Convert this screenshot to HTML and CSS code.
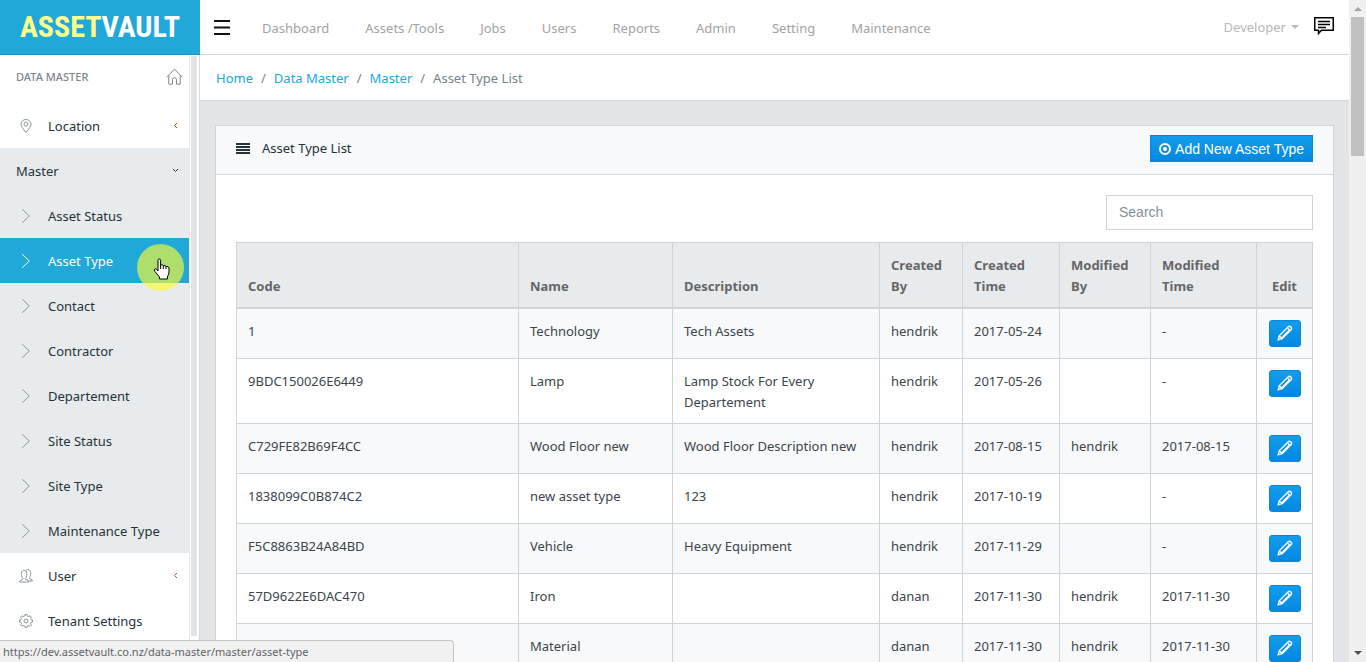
FILE: index.html
```
<!DOCTYPE html>
<html lang="en">
<head>
<meta charset="utf-8">
<title>Asset Type List</title>
<link rel="stylesheet" href="styles.css">
</head>
<body>
<svg class="sprite" aria-hidden="true">
  <symbol id="chevron" viewBox="0 0 8 14"><path d="M.3.3l7 6.700-7 6.700"/></symbol>
  <symbol id="small-left" viewBox="0 0 6 7"><path d="M4.500 1L2 3.500L4.500 6"/></symbol>
  <symbol id="small-down" viewBox="0 0 7 6"><path d="M1 1.500L3.500 4L6 1.500"/></symbol>
  <symbol id="pencil" viewBox="0 0 16 16"><path d="M1.200 14.800l1-4L11.300 1.700q1.200-1 2.500.3t.4 2.500L5.200 13.700zM2.200 10.800l3 2.900M11 3.500l1.500 1.500L5 12.500"/></symbol>
</svg>
<div class="page">
  <div class="app">
    <header class="topbar">
      <a class="brand" href="#"><span class="brand-first">ASSET</span>VAULT</a>
      <button class="menu-toggle" type="button" aria-label="Toggle menu">
        <svg width="16" height="15" viewBox="0 0 16 15"><path d="M0 1h16M0 7.500h16M0 14h16"/></svg>
      </button>
      <nav class="topnav">
        <a href="#">Dashboard</a>
        <a href="#">Assets /Tools</a>
        <a href="#">Jobs</a>
        <a href="#">Users</a>
        <a href="#">Reports</a>
        <a href="#">Admin</a>
        <a href="#">Setting</a>
        <a href="#">Maintenance</a>
      </nav>
      <button class="account" type="button">Developer<span class="caret"></span></button>
      <button class="messages" type="button" aria-label="Messages">
        <svg width="20" height="18" viewBox="0 0 20 18"><path d="M.75.75h18.500v12.500H7.500L4.500 16.500v-3.250H.75z"/><path d="M4 4.500h12M4 7.500h12M4 10.500h8"/></svg>
      </button>
    </header>
    <div class="body">
      <aside class="sidebar">
        <div class="menu">
          <div class="menu-title">DATA MASTER
            <svg class="home" viewBox="0 0 17 17"><path d="M.8 9L8.500 1.200 16.200 9M2.800 7.500v8.700h3.700v-4.700q0-1.700 2-1.700t2 1.700v4.700h3.700V7.500"/></svg>
          </div>
          <a class="item" href="#">
            <svg class="icon" viewBox="0 0 14 14"><path d="M7 13.500C4 9.800 2 7.500 2 5.200a5 4.700 0 0 1 10 0C12 7.500 10 9.800 7 13.500z"/><circle cx="7" cy="5.200" r="2"/></svg>
            Location<svg class="arrow arrow-left"><use href="#small-left"/></svg>
          </a>
          <div class="submenu">
            <a class="item" href="#">Master<svg class="arrow arrow-down"><use href="#small-down"/></svg></a>
            <a class="item" href="#"><svg class="icon"><use href="#chevron"/></svg>Asset Status</a>
            <a class="item active" href="#"><svg class="icon"><use href="#chevron"/></svg>Asset Type</a>
            <a class="item" href="#"><svg class="icon"><use href="#chevron"/></svg>Contact</a>
            <a class="item" href="#"><svg class="icon"><use href="#chevron"/></svg>Contractor</a>
            <a class="item" href="#"><svg class="icon"><use href="#chevron"/></svg>Departement</a>
            <a class="item" href="#"><svg class="icon"><use href="#chevron"/></svg>Site Status</a>
            <a class="item" href="#"><svg class="icon"><use href="#chevron"/></svg>Site Type</a>
            <a class="item" href="#"><svg class="icon"><use href="#chevron"/></svg>Maintenance Type</a>
          </div>
          <a class="item" href="#">
            <svg class="icon" viewBox="0 0 14 14"><path d="M.5 13c0-2.500 3.500-1.500 3.500-3.500C2.500 8 2.300 6 2.500 4c.3-3.500 5-3.500 5.300 0 .2 2 0 4-1.500 5.500 0 2 3.700 1 3.700 3.500zM7 1.300c2-1.600 4.500-.3 4.700 2.200.2 2-.1 3.700-1.400 5 0 2 3.200 1.200 3.200 3.500H10"/></svg>
            User<svg class="arrow arrow-left"><use href="#small-left"/></svg>
          </a>
          <a class="item" href="#">
            <svg class="icon" viewBox="0 0 14 14"><path d="M5.800 2L6 .6h2L8.200 2l1.600.6 1.200-.9 1.400 1.400-.9 1.200.6 1.500 1.400.2v2l-1.400.2-.6 1.600.9 1.200-1.400 1.400-1.200-.9-1.600.6L8 13.400H6L5.800 12l-1.600-.6-1.200.9-1.400-1.400.9-1.200L1.900 8.200.5 8V6l1.400-.2.6-1.500-.9-1.200L3 1.700l1.200.9z"/><circle cx="7" cy="7" r="2"/></svg>
            Tenant Settings
          </a>
        </div>
        <div class="side-scroll"><div class="side-thumb"></div></div>
      </aside>
      <div class="content">
        <nav class="crumbs" aria-label="Breadcrumb">
          <a href="#">Home</a><span>/</span><a href="#">Data Master</a><span>/</span><a href="#">Master</a><span>/</span>Asset Type List
        </nav>
        <main class="main">
          <section class="card">
            <div class="card-head">
              <svg width="14" height="11" viewBox="0 0 14 11"><path d="M0 1h14M0 4h14M0 7h14M0 10h14"/></svg>
              <h1>Asset Type List</h1>
              <button class="add" type="button">
                <svg width="12" height="12" viewBox="0 0 12 12"><circle class="ring" cx="6" cy="6" r="5"/><circle class="dot" cx="6" cy="6" r="2"/></svg>
                Add New Asset Type
              </button>
            </div>
            <div class="card-body">
              <input class="search" type="text" placeholder="Search" aria-label="Search">
              <table>
                <colgroup><col><col class="c-name"><col class="c-desc"><col class="c-by"><col class="c-time"><col class="c-mby"><col class="c-mtime"><col class="c-edit"></colgroup>
                <thead><tr><th>Code</th><th>Name</th><th>Description</th><th>Created By</th><th>Created Time</th><th>Modified By</th><th>Modified Time</th><th class="center">Edit</th></tr></thead>
                <tbody>
                  <tr><td>1</td><td>Technology</td><td>Tech Assets</td><td>hendrik</td><td>2017-05-24</td><td></td><td>-</td><td class="action"><button class="edit" type="button" aria-label="Edit"><svg><use href="#pencil"/></svg></button></td></tr>
                  <tr><td>9BDC150026E6449</td><td>Lamp</td><td>Lamp Stock For Every Departement</td><td>hendrik</td><td>2017-05-26</td><td></td><td>-</td><td class="action"><button class="edit" type="button" aria-label="Edit"><svg><use href="#pencil"/></svg></button></td></tr>
                  <tr><td>C729FE82B69F4CC</td><td>Wood Floor new</td><td>Wood Floor Description new</td><td>hendrik</td><td>2017-08-15</td><td>hendrik</td><td>2017-08-15</td><td class="action"><button class="edit" type="button" aria-label="Edit"><svg><use href="#pencil"/></svg></button></td></tr>
                  <tr><td>1838099C0B874C2</td><td>new asset type</td><td>123</td><td>hendrik</td><td>2017-10-19</td><td></td><td>-</td><td class="action"><button class="edit" type="button" aria-label="Edit"><svg><use href="#pencil"/></svg></button></td></tr>
                  <tr><td>F5C8863B24A84BD</td><td>Vehicle</td><td>Heavy Equipment</td><td>hendrik</td><td>2017-11-29</td><td></td><td>-</td><td class="action"><button class="edit" type="button" aria-label="Edit"><svg><use href="#pencil"/></svg></button></td></tr>
                  <tr><td>57D9622E6DAC470</td><td>Iron</td><td></td><td>danan</td><td>2017-11-30</td><td>hendrik</td><td>2017-11-30</td><td class="action"><button class="edit" type="button" aria-label="Edit"><svg><use href="#pencil"/></svg></button></td></tr>
                  <tr><td></td><td>Material</td><td></td><td>danan</td><td>2017-11-30</td><td>hendrik</td><td>2017-11-30</td><td class="action"><button class="edit" type="button" aria-label="Edit"><svg><use href="#pencil"/></svg></button></td></tr>
                </tbody>
              </table>
            </div>
          </section>
        </main>
      </div>
    </div>
  </div>
  <div class="scrollbar">
    <span class="scroll-up"></span>
    <div class="scroll-thumb"></div>
    <span class="scroll-down"></span>
  </div>
  <div class="status">https://dev.assetvault.co.nz/data-master/master/asset-type</div>
  <div class="halo"></div>
  <svg class="pointer" viewBox="0 0 18 22"><path d="M5 12V2.500q0-1.500 1.300-1.500t1.300 1.500V7q2-.8 2.700.7 2-.6 2.700.8 2.700-.5 3 1.500v4q0 2-1.500 4.500v2.500H6.500v-2L2 13.500Q.5 11.500 2 10.700q1.300-.5 3 2.300z"/><path d="M7.600 7v4M10.300 7.700V11M13 8.500V11"/></svg>
</div>
</body>
</html>
```
FILE: styles.css
```
* { box-sizing: border-box; }

body {
  margin: 0;
  font: 13px/21px "Noto Sans", "Open Sans", sans-serif;
  color: #263238;
}

a { text-decoration: none; color: #20a8d8; }
button { padding: 0; border: 0; background: none; font: inherit; cursor: pointer; }
svg { fill: none; stroke: currentColor; flex: none; }
.sprite { display: none; }

.page { position: relative; display: flex; height: 100vh; overflow: hidden; }
.app { flex: 1; min-width: 0; display: flex; flex-direction: column; }

/* Top bar */
.topbar { display: flex; align-items: center; height: 55px; flex: none; border-bottom: 1px solid #cfd8dc; }
.brand {
  width: 200px; height: 55px; display: flex; align-items: center; justify-content: center;
  align-self: flex-start;
  background: #20a8d8; border-bottom: 1px solid #1c96c1; color: #fff;
  font: bold 30px/54px "Roboto Condensed", "Open Sans Condensed", Lato, sans-serif;
}
.brand-first { color: #ffff8d; }
.menu-toggle { display: flex; margin-left: 14px; color: #111; }
.menu-toggle svg { stroke-width: 2; }
.topnav { display: flex; gap: 36px; margin-left: 32px; padding-top: 2px; flex: 1; }
.topnav a { color: #a2a2a2; }
.account { display: flex; align-items: center; gap: 5px; color: #b8b8b8; }
.caret { border: 4px solid transparent; border-top-color: currentColor; border-bottom: 0; }
.messages { display: flex; margin: 0 15px; padding-bottom: 3px; color: #000; }
.messages svg { stroke-width: 1.5; }

.body { display: flex; flex: 1; min-height: 0; }

/* Sidebar */
.sidebar { width: 200px; flex: none; display: flex; border-right: 1px solid #cfd8dc; overflow: hidden; }
.menu { flex: 1; }
.menu-title {
  display: flex; align-items: center; justify-content: space-between;
  height: 48px; padding: 0 6px 5px 16px; font-size: 11px; font-weight: 500; color: #7b858c;
}
.home { width: 17px; height: 17px; }
.item { display: flex; align-items: center; height: 45px; padding: 2px 10px 0 16px; color: #263238; }
.icon { width: 20px; height: 14px; margin: 0 12px 2px 0; color: #8a969c; }
.arrow { margin: 0 0 3px auto; width: 7px; height: 7px; stroke-width: 1; }
.arrow-left { color: #b8561a; }
.submenu { background: #e7ebee; }
.active, .active .icon { background: #20a8d8; color: #fff; }
.side-scroll { width: 10px; border-left: 1px solid #e8e8e8; padding: 1px 2px 0 1px; }
.side-thumb { height: 580px; background: #e3e3e3; }

/* Content */
.content { flex: 1; min-width: 0; display: flex; flex-direction: column; background: #e4e5e6; }
.crumbs {
  display: flex; align-items: center; height: 46px; flex: none; padding: 2px 16px 0;
  background: #fff; border-bottom: 1px solid #cfd8dc; color: #75838a;
}
.crumbs span { padding: 0 8px; }
.main { padding: 24px 15px; }
.card { background: #fff; border: 1px solid #cfd4d8; }
.card-head {
  display: flex; align-items: center; height: 49px; padding: 0 20px 3px;
  background: #f7f9fa; border-bottom: 1px solid #cfd8dc;
}
.card-head h1 { flex: 1; margin: 0 0 0 12px; font: inherit; }
.card-head > svg { stroke-width: 2; }
.add {
  display: flex; align-items: center; gap: 4px; height: 27px; padding: 0 8px;
  border: 1px solid #0a87dc; background: linear-gradient(#149cec, #0288e0); color: #fff;
  font: 14px/20px "Liberation Sans", Arial, sans-serif;
}
.ring { stroke-width: 2; }
.dot { fill: currentColor; stroke: none; }
.card-body { padding: 20px; }
.search {
  display: block; width: 207px; height: 35px; margin: 0 0 12px auto; padding: 0 12px 2px;
  border: 1px solid #cfd4d8; background: #fff; font: 14px/20px "Liberation Sans", Arial, sans-serif;
}
.search::placeholder { color: #869198; }

table { width: 100%; table-layout: fixed; border-collapse: collapse; }
.c-name { width: 154px; }
.c-desc { width: 207px; }
.c-by { width: 83px; }
.c-time { width: 97px; }
.c-mby { width: 91px; }
.c-mtime { width: 106px; }
.c-edit { width: 56px; }
th, td { padding: 12px 11px 10px; border: 1px solid #cfd4d8; text-align: left; vertical-align: top; }
th { vertical-align: bottom; border-bottom-width: 2px; background: #e7ebee; color: #666; font-weight: 700; }
td { color: #3b444a; }
th.center { text-align: center; }
td.action { padding: 11px 12px; }
tbody tr:nth-child(odd) { background: #f7f9fa; }
.edit {
  display: flex; align-items: center; justify-content: center; width: 32px; height: 27px; padding-bottom: 2px;
  border: 1px solid #0a87dc; border-radius: 3px; background: linear-gradient(#149cec, #0288e0); color: #fff;
}
.edit svg { width: 16px; height: 16px; stroke-width: 1.400; }

/* Window scrollbar */
.scrollbar {
  width: 17px; flex: none; display: flex; flex-direction: column; align-items: center;
  padding: 7px 0; background: #f0f0f0;
}
.scroll-up { border: 4px solid transparent; border-bottom-color: #a3a3a3; border-top: 0; }
.scroll-thumb { width: 13px; height: 139px; margin-top: 6px; background: #c1c1c1; }
.scroll-down { margin-top: auto; border: 4px solid transparent; border-top-color: #505050; border-bottom: 0; }

/* Overlays */
.status {
  position: absolute; left: 0; bottom: 0; width: 454px; height: 22px; padding: 0 3px;
  border: 1px solid #c4c4c4; border-left: 0; border-bottom: 0; border-radius: 0 4px 0 0;
  background: #f1f1f1; color: #5f6366; font-size: 11px; line-height: 22px;
}
.halo {
  position: absolute; left: 137px; top: 244px; width: 47px; height: 47px;
  border-radius: 50%; background: rgba(250, 250, 50, .65);
}
.pointer { position: absolute; left: 153px; top: 258px; width: 18px; height: 22px; fill: #fff; color: #000; }
```
